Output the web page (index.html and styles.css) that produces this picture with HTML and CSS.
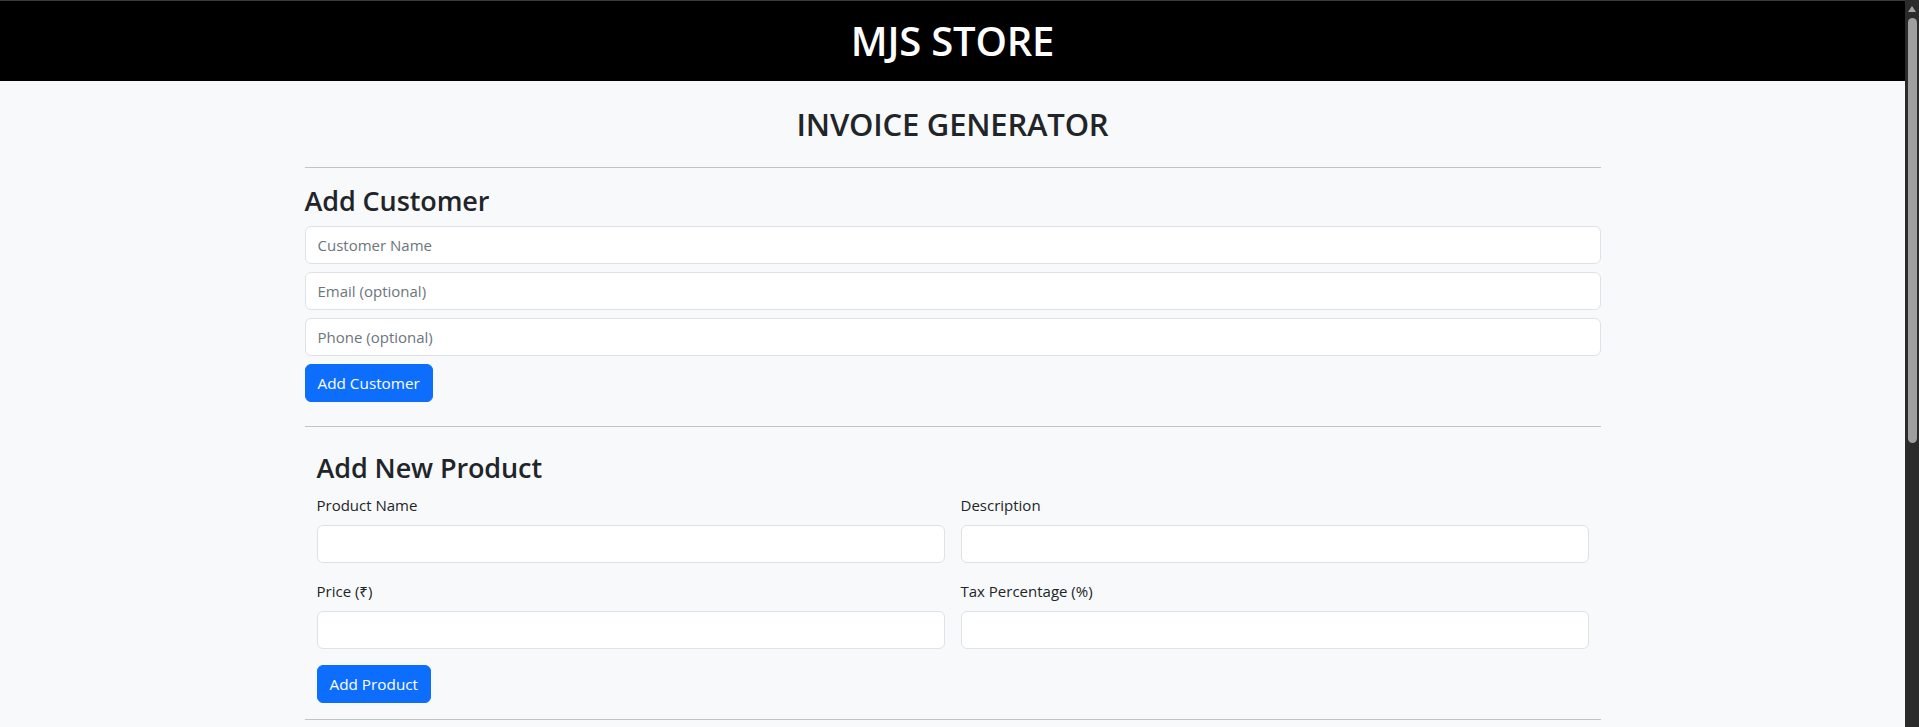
FILE: index.html
```html
<!DOCTYPE html>
<html lang="en">
<head>
<meta charset="utf-8">
<title>MJS STORE - Invoice Generator</title>
<link rel="stylesheet" href="styles.css">
</head>
<body>
<header class="topbar">
  <h1 class="brand">MJS STORE</h1>
</header>
<main class="container">
  <h2 class="page-title">INVOICE GENERATOR</h2>
  <hr class="divider">

  <section class="customer">
    <h3 class="section-title">Add Customer</h3>
    <input class="form-control stack" type="text" placeholder="Customer Name">
    <input class="form-control stack" type="email" placeholder="Email (optional)">
    <input class="form-control stack" type="text" placeholder="Phone (optional)">
    <button class="btn btn-primary btn-gap">Add Customer</button>
  </section>

  <hr class="divider">

  <section class="inner product">
    <h3 class="section-title">Add New Product</h3>
    <div class="grid-2">
      <div class="field">
        <label class="form-label">Product Name</label>
        <input class="form-control" type="text">
      </div>
      <div class="field">
        <label class="form-label">Description</label>
        <input class="form-control" type="text">
      </div>
      <div class="field">
        <label class="form-label">Price (₹)</label>
        <input class="form-control" type="number">
      </div>
      <div class="field">
        <label class="form-label">Tax Percentage (%)</label>
        <input class="form-control" type="number">
      </div>
    </div>
    <button class="btn btn-primary">Add Product</button>
  </section>

  <hr class="divider">
</main>

<div class="fake-scrollbar" aria-hidden="true">
  <span class="sb-arrow"></span>
  <span class="sb-thumb"></span>
</div>
</body>
</html>
```

FILE: styles.css
```css
* {
  box-sizing: border-box;
}
html {
  overflow: hidden;
}
body {
  margin: 0;
  padding-right: 14px;
  background: #f8f9fa;
  color: #212529;
  font-family: "Open Sans", "Noto Sans", sans-serif;
  font-size: 16px;
  line-height: 1.5;
}

.topbar {
  background: #000;
  border-top: 1px solid #3a3a3a;
  padding: 16px 0;
  text-align: center;
}
.brand {
  margin: 0;
  color: #fff;
  font-size: 40px;
  font-weight: 600;
  line-height: 48px;
  letter-spacing: -0.2px;
}

.container {
  max-width: 1320px;
  margin: 0 auto;
  padding: 24px 12px 0;
}

.page-title {
  margin: 0 0 24px;
  text-align: center;
  font-size: 31px;
  font-weight: 600;
  line-height: 38px;
  letter-spacing: -0.2px;
}

.divider {
  margin: 16px 0;
  border: 0;
  border-top: 1px solid #212529;
  opacity: .25;
}

.section-title {
  margin: 0 0 8px;
  font-size: 27px;
  font-weight: 600;
  line-height: 34px;
  letter-spacing: -0.1px;
}

.form-control {
  display: block;
  width: 100%;
  height: 38px;
  padding: 6px 12px;
  font-family: inherit;
  font-size: 15px;
  line-height: 24px;
  color: #212529;
  background: #fff;
  border: 1px solid #dee2e6;
  border-radius: 6px;
  appearance: none;
}
.form-control::placeholder {
  color: #6c757d;
  opacity: 1;
}
.stack {
  margin-bottom: 8px;
}

.btn {
  display: inline-block;
  height: 38px;
  padding: 6px 12px;
  font-family: inherit;
  font-size: 15.3px;
  line-height: 24px;
  border: 1px solid transparent;
  border-radius: 6px;
  cursor: pointer;
  vertical-align: top;
}
.btn-primary {
  color: #fff;
  background: #0d6efd;
  border-color: #0d6efd;
}
.btn-gap {
  margin-bottom: 8px;
}

.inner {
  padding: 8px 12px 0;
}

.grid-2 {
  display: grid;
  grid-template-columns: 1fr 1fr;
  column-gap: 16px;
}
.field {
  margin-bottom: 16px;
}
.form-label {
  display: block;
  margin-bottom: 8px;
  font-size: 15px;
  line-height: 24px;
}

.fake-scrollbar {
  position: fixed;
  top: 0;
  right: 0;
  width: 14px;
  height: 100vh;
  background: #2b2b2b;
}
.sb-arrow {
  position: absolute;
  top: 6px;
  left: 2.5px;
  width: 0;
  height: 0;
  border-left: 4.5px solid transparent;
  border-right: 4.5px solid transparent;
  border-bottom: 6px solid #a3a3a3;
}
.sb-thumb {
  position: absolute;
  top: 18px;
  left: 2.5px;
  width: 9px;
  height: 425px;
  border-radius: 4.5px;
  background: #9f9f9f;
}
```
